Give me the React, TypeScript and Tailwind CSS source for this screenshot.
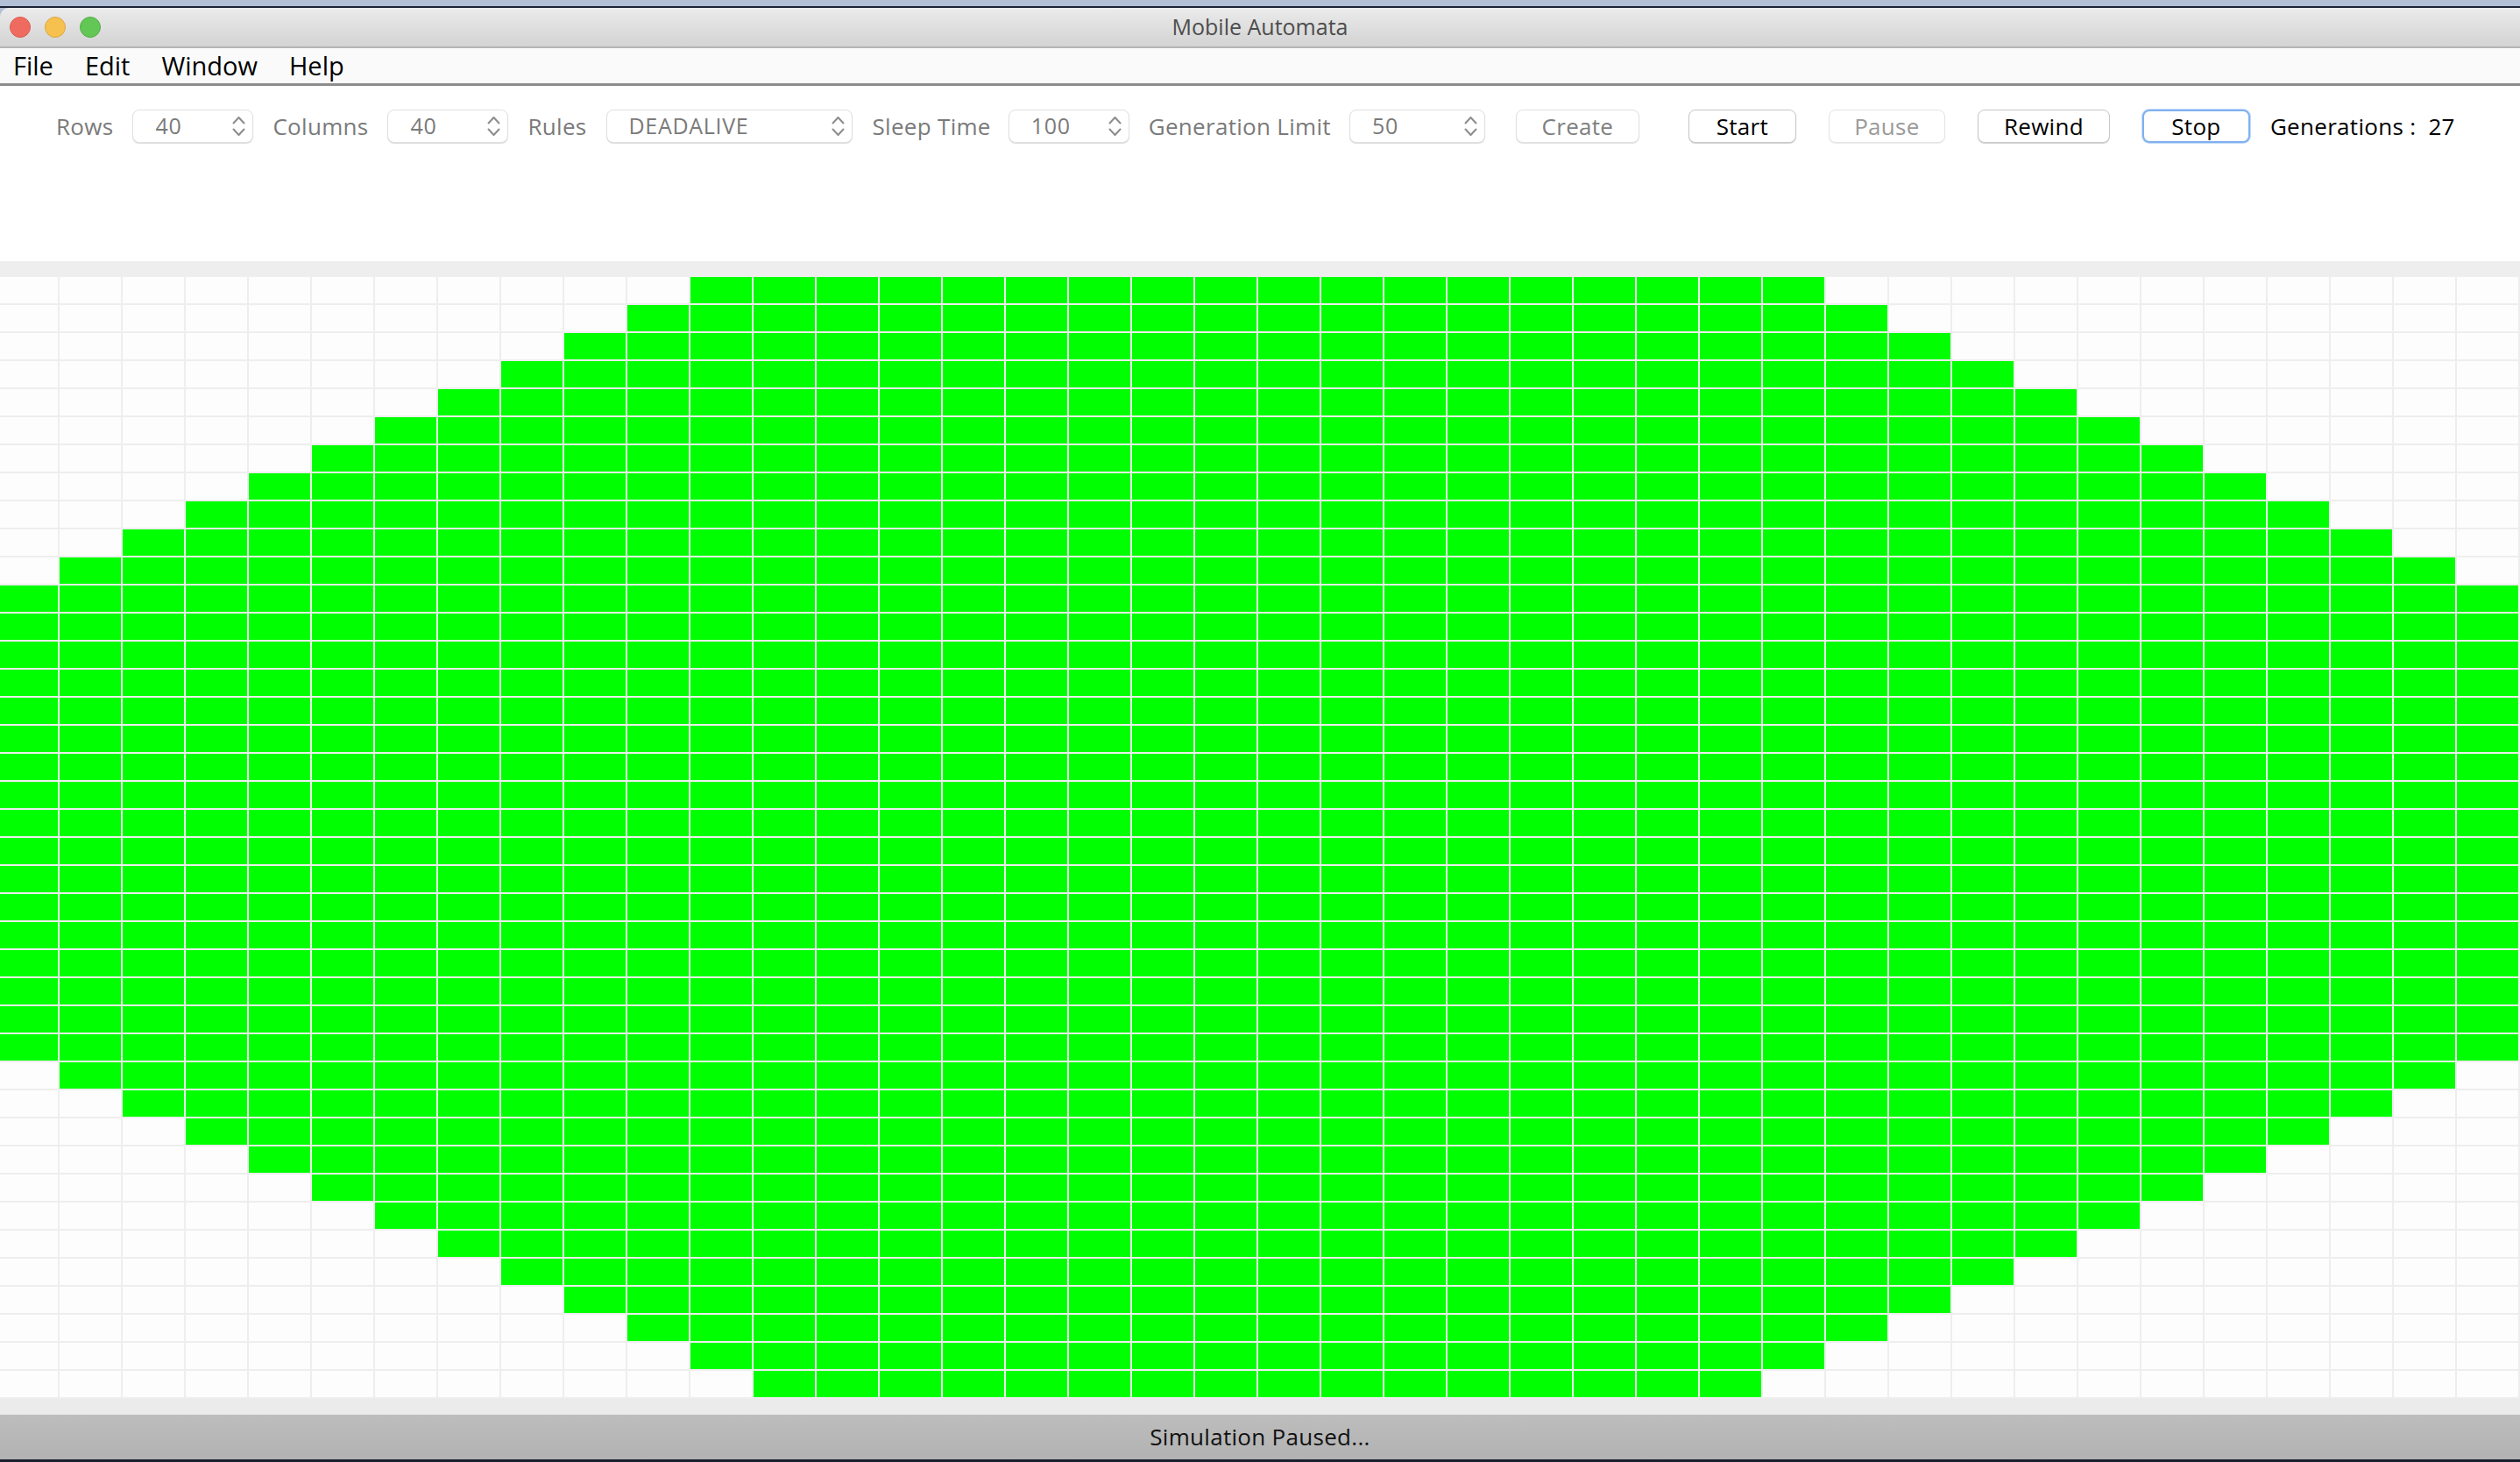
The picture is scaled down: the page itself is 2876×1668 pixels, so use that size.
import React from "react";

const ROWS = 40;
const COLS = 40;

// diamond of live cells: top edge shrinks one column per row above row 11,
// bottom edge shrinks one column per row below row 27
function isAlive(r: number, c: number) {
  const left = Math.max(0, 11 - r, r - 27);
  return c >= left && c <= COLS - 1 - left;
}

function Chevrons() {
  return (
    <svg width="15" height="26" viewBox="0 0 15 26" fill="none">
      <path d="M1.5 9.5L7.5 3l6 6.5" stroke="#8c8c8c" strokeWidth="2" strokeLinecap="round" strokeLinejoin="round" />
      <path d="M1.5 16.5L7.5 23l6-6.5" stroke="#8c8c8c" strokeWidth="2" strokeLinecap="round" strokeLinejoin="round" />
    </svg>
  );
}

function Spinner({ value, className }: { value: string; className: string }) {
  return (
    <div
      className={`flex h-[38px] items-center justify-between rounded-[8px] border border-[#e0e0e0] bg-white pl-[25px] pr-[8px] shadow-[0_1px_1px_rgba(0,0,0,0.14)] ${className}`}
    >
      <span className="text-[25px] tracking-[0.7px] text-[#7a7a7a]">{value}</span>
      <Chevrons />
    </div>
  );
}

function Button({ label, className }: { label: string; className: string }) {
  return (
    <div
      className={`flex h-[38px] items-center justify-center rounded-[8px] bg-white text-[26px] tracking-[0.3px] ${className}`}
    >
      {label}
    </div>
  );
}

export default function App() {
  const cells = [];
  for (let r = 0; r < ROWS; r++) {
    for (let c = 0; c < COLS; c++) {
      cells.push(
        <div key={`${r}-${c}`} className={isAlive(r, c) ? "bg-[#00ff00]" : "bg-[#fdfdfd]"} />
      );
    }
  }

  return (
    <div className="flex h-[1668px] w-[2876px] flex-col overflow-hidden bg-[#b3c0d5] font-['Open_Sans',sans-serif]">
      {/* desktop strip */}
      <div className="h-[7px] shrink-0 bg-[#b3c0d5]" />
      <div className="h-[2px] shrink-0 bg-[#1b2436]" />

      {/* title bar */}
      <div className="grid h-[44px] shrink-0 grid-cols-[1fr_auto_1fr] items-center rounded-tl-[10px] bg-gradient-to-b from-[#ebebeb] to-[#d3d3d3]">
        <div className="flex items-center gap-[16px] pl-[11px]">
          <span className="h-[24px] w-[24px] rounded-full border border-[#dc5a4f] bg-[#ef6b60]" />
          <span className="h-[24px] w-[24px] rounded-full border border-[#dca63f] bg-[#f6c14f]" />
          <span className="h-[24px] w-[24px] rounded-full border border-[#55ad47] bg-[#62c755]" />
        </div>
        <div className="text-[25px] text-[#4d4d4d]">Mobile Automata</div>
        <div />
      </div>
      <div className="h-[2px] shrink-0 bg-[#b4b4b4]" />

      {/* menu bar */}
      <div className="flex h-[40px] shrink-0 items-center gap-[36px] bg-[#fafafa] pl-[15px] text-[29px] text-black">
        <span>File</span>
        <span>Edit</span>
        <span>Window</span>
        <span>Help</span>
      </div>
      <div className="h-[3px] shrink-0 bg-[#8d8d8d]" />

      {/* toolbar */}
      <div className="flex h-[200px] shrink-0 items-start bg-white pl-[64px] pt-[27px]">
        <div className="flex h-[38px] items-center text-[26px] tracking-[0.3px] text-[#7a7a7a]">
          <span>Rows</span>
          <Spinner value="40" className="ml-[22px] w-[138px]" />
          <span className="ml-[22px]">Columns</span>
          <Spinner value="40" className="ml-[22px] w-[138px]" />
          <span className="ml-[22px]">Rules</span>
          <Spinner value="DEADALIVE" className="ml-[22px] w-[281px]" />
          <span className="ml-[23px]">Sleep Time</span>
          <Spinner value="100" className="ml-[20px] w-[138px]" />
          <span className="ml-[22px]">Generation Limit</span>
          <Spinner value="50" className="ml-[21px] w-[155px]" />
          <Button
            label="Create"
            className="ml-[35px] w-[141px] border border-[#e0e0e0] text-[#7f7f7f] shadow-[0_1px_1px_rgba(0,0,0,0.12)]"
          />
          <Button
            label="Start"
            className="ml-[56px] w-[123px] border border-[#c8c8c8] text-black shadow-[0_1px_1px_rgba(0,0,0,0.18)]"
          />
          <Button
            label="Pause"
            className="ml-[37px] w-[133px] border border-[#e3e3e3] text-[#9a9a9a] shadow-[0_1px_1px_rgba(0,0,0,0.08)]"
          />
          <Button
            label="Rewind"
            className="ml-[37px] w-[151px] border border-[#c8c8c8] text-black shadow-[0_1px_1px_rgba(0,0,0,0.18)]"
          />
          <Button
            label="Stop"
            className="ml-[37px] w-[123px] border-2 border-[#7fb1f0] text-black shadow-[0_0_0_1px_#c4dbf8]"
          />
          <span className="ml-[23px] whitespace-pre text-black">Generations :  27</span>
        </div>
      </div>

      <div className="h-[18px] shrink-0 bg-[#eeeeee]" />

      {/* automaton grid */}
      <div className="h-[1280px] shrink-0 overflow-hidden bg-[#eeeeee]">
        <div className="-ml-[4px] grid w-[2878px] grid-cols-[repeat(40,70px)] grid-rows-[repeat(40,30px)] gap-[2px]">
          {cells}
        </div>
      </div>

      <div className="h-[18px] shrink-0 bg-[#ebebeb]" />

      {/* status bar */}
      <div className="flex h-[51px] shrink-0 items-center justify-center bg-gradient-to-b from-[#bdbdbd] to-[#b2b2b2] text-[26px] tracking-[0.3px] text-[#111111]">
        Simulation Paused...
      </div>
      <div className="h-[3px] shrink-0 bg-[#1a2030]" />
    </div>
  );
}
